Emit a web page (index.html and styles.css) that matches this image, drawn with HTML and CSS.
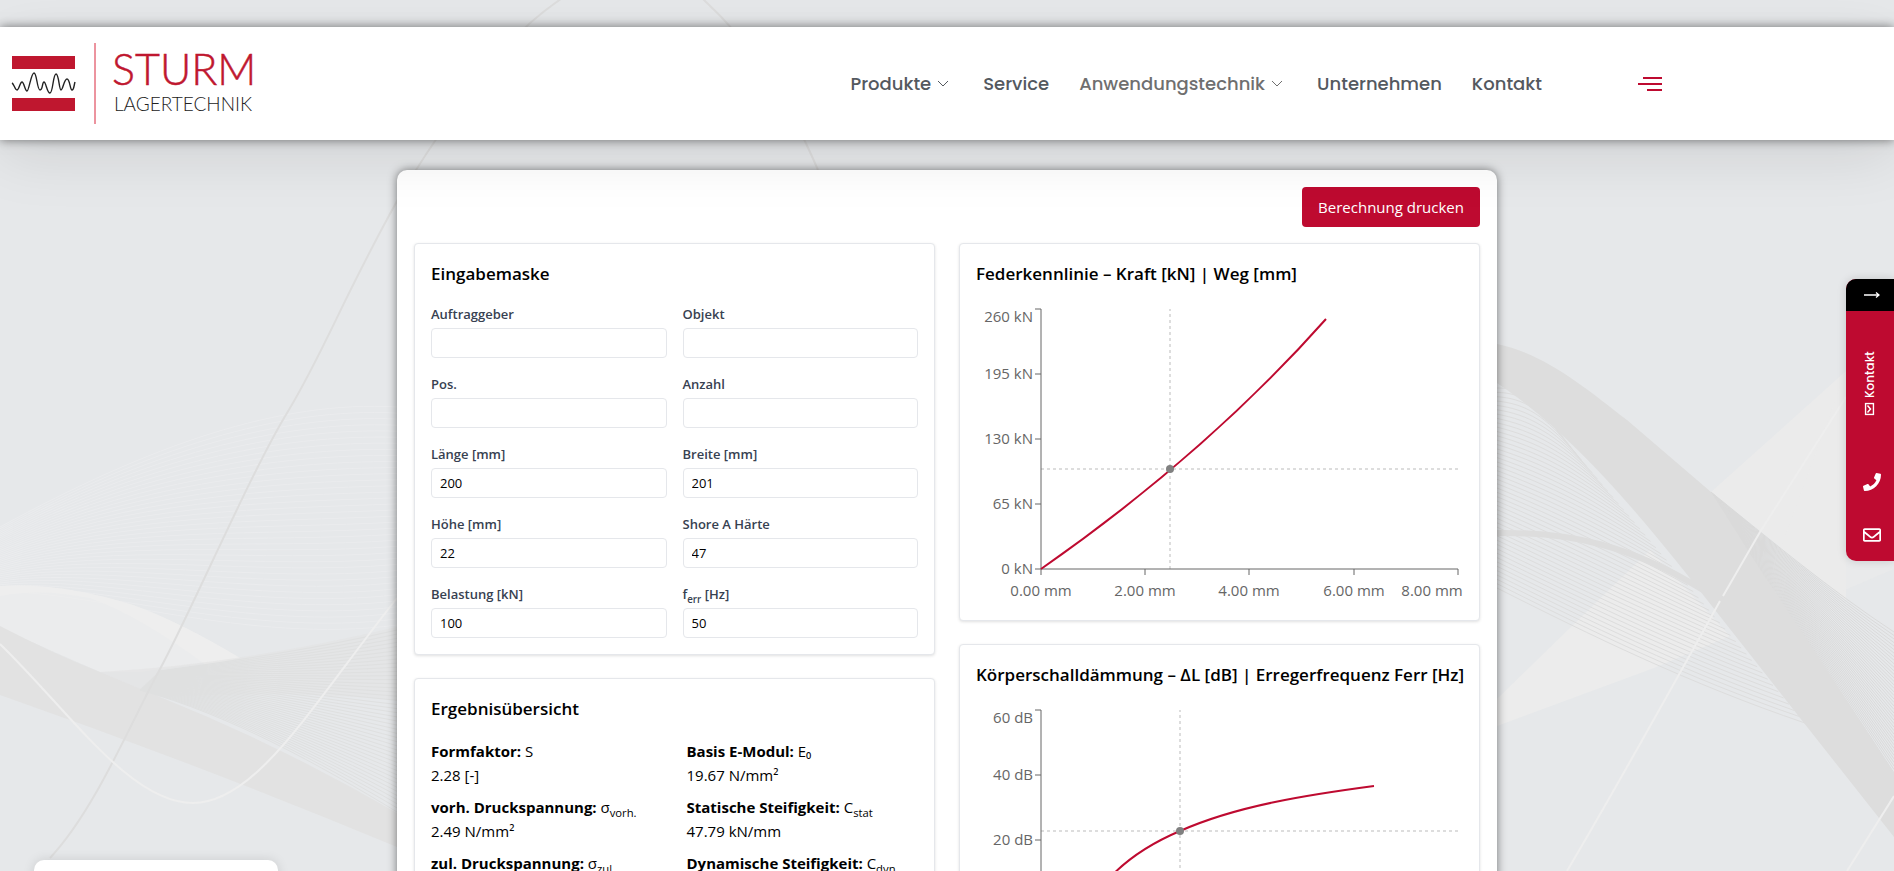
FILE: index.html
```html
<!DOCTYPE html>
<html lang="de">
<head>
<meta charset="utf-8">
<meta name="viewport" content="width=device-width, initial-scale=1">
<title>Sturm Lagertechnik</title>
<link rel="stylesheet" href="styles.css">
</head>
<body>
<div class="page">
  <svg class="backdrop" viewBox="0 0 1894 871" preserveAspectRatio="xMidYMid slice" aria-hidden="true">
    <g id="veil-left" stroke="#ebecee" fill="none"></g>
    <path fill="#eeeeee" fill-opacity=".6" d="M0 586Q60 582 133 605Q180 622 240 658L140 672L100 672Q50 650 0 628Z"/>
    <path fill="#eeeeee" d="M0 586Q60 582 133 605Q180 622 240 658L207 666Q140 616 90 598Q40 588 0 596Z"/>
    <path fill="#e2e2e2" d="M0 626Q50 652 100 672L160 697Q280 745 397 813V847Q200 765 0 695Z"/>
    <path fill="#e2e2e2" fill-opacity=".6" d="M100 672Q240 664 397 627V700Q280 690 160 697Z"/>
    <g id="veil-low" stroke="#dfe0e0" fill="none"></g>
    <path fill="none" stroke="#dddddd" stroke-width="2" d="M50 858C95 810 130 724 160 669S250 474 287 413S340 304 397 201C430 145 480 72 529 24C590 -30 650 -50 704 0S790 105 818 170"/>
    <path fill="none" stroke="#eeeeee" stroke-width="2" d="M0 644C70 712 130 803 193 803S310 708 397 598"/>
    <path fill="#ebebeb" d="M1711 492L1846 371V600L1794 558Z"/>
    <path fill="#ebebeb" fill-opacity=".6" d="M1846 371L1894 340V569L1840 592L1780 550Z"/>
    <path fill="#ececec" d="M1497 699L1650 550L1730 636L1654 668L1497 726Z"/>
    <g id="veil-right" stroke="#dddddd" fill="none"></g>
    <path fill="none" stroke="#dddddd" stroke-width="6" d="M1497 533C1570 532 1630 545 1703 590"/>
    <g id="veil-edge" stroke="#dadada" fill="none"></g>
    <path fill="#dddddd" d="M1497 344C1543 353 1585 387 1627 420L1711 492Q1735 530 1761 571Q1794 620 1827 670L1894 773V837L1804 723Q1745 648 1689 577C1620 490 1560 425 1497 383Z"/>
    <path fill="none" stroke="#eeeeee" stroke-width="2" d="M1567 871C1615 790 1665 700 1720 601M1723 596L1760 532L1846 397M1847 871L1894 796"/>
  </svg>

  <header class="topbar">
    <a class="logo" href="#" aria-label="Sturm Lagertechnik">
      <svg width="270" height="89" viewBox="0 0 270 89">
        <path fill="#bf172f" d="M12 17h63v13H12zM12 59h63v13H12z"/>
        <path fill="none" stroke="#222" stroke-width="1.400" d="M12 44c2 1 3 7 5 7s3-8 5-8 3 9 5 9 4-18 7-18 3 17 6 17 2-8 4-8 3 11 6 11 3-19 6-19 3 16 5 16 3-11 6-11 3 11 5 11 2-5 3-8"/>
        <path stroke="#d9293f" d="M95 4v81"/>
        <text class="logo-name" x="112" y="46">STURM</text>
        <text class="logo-sub" x="114" y="72">LAGERTECHNIK</text>
      </svg>
    </a>
    <nav class="nav">
      <a class="nav-link nav-drop" href="#">Produkte
        <svg width="12" height="8" viewBox="0 0 12 8"><path d="M1 1l5 5 5-5"/></svg></a>
      <a class="nav-link" href="#">Service</a>
      <a class="nav-link nav-drop nav-current" href="#">Anwendungstechnik
        <svg width="12" height="8" viewBox="0 0 12 8"><path d="M1 1l5 5 5-5"/></svg></a>
      <a class="nav-link" href="#">Unternehmen</a>
      <a class="nav-link" href="#">Kontakt</a>
    </nav>
    <button class="burger" type="button" aria-label="Menü">
      <svg width="24" height="16" viewBox="0 0 24 16"><path fill="#be0a30" d="M5 1h19v2H5zM0 7h24v2H0zM9 13h15v2H9z"/></svg>
    </button>
  </header>

  <main class="panel">
    <div class="actions"><button class="print" type="button">Berechnung drucken</button></div>
    <div class="columns">
      <div class="column">
        <section class="card">
          <h2>Eingabemaske</h2>
          <form class="fields">
            <div class="field"><label for="f1">Auftraggeber</label><input id="f1" type="text"></div>
            <div class="field"><label for="f2">Objekt</label><input id="f2" type="text"></div>
            <div class="field"><label for="f3">Pos.</label><input id="f3" type="text"></div>
            <div class="field"><label for="f4">Anzahl</label><input id="f4" type="text"></div>
            <div class="field"><label for="f5">Länge [mm]</label><input id="f5" type="text" value="200"></div>
            <div class="field"><label for="f6">Breite [mm]</label><input id="f6" type="text" value="201"></div>
            <div class="field"><label for="f7">Höhe [mm]</label><input id="f7" type="text" value="22"></div>
            <div class="field"><label for="f8">Shore A Härte</label><input id="f8" type="text" value="47"></div>
            <div class="field"><label for="f9">Belastung [kN]</label><input id="f9" type="text" value="100"></div>
            <div class="field"><label for="f10">f<sub>err</sub> [Hz]</label><input id="f10" type="text" value="50"></div>
          </form>
        </section>
        <section class="card card-fill">
          <h2>Ergebnisübersicht</h2>
          <div class="results">
            <p><strong>Formfaktor:</strong> S<br>2.28 [-]</p>
            <p><strong>Basis E-Modul:</strong> E₀<br>19.67 N/mm²</p>
            <p><strong>vorh. Druckspannung:</strong> σ<sub>vorh.</sub><br>2.49 N/mm²</p>
            <p><strong>Statische Steifigkeit:</strong> C<sub>stat</sub><br>47.79 kN/mm</p>
            <p><strong>zul. Druckspannung:</strong> σ<sub>zul.</sub></p>
            <p><strong>Dynamische Steifigkeit:</strong> C<sub>dyn</sub></p>
          </div>
        </section>
      </div>
      <div class="column">
        <section class="card">
          <h2>Federkennlinie – Kraft [kN] | Weg [mm]</h2>
          <svg class="chart" viewBox="0 0 487 300">
            <path class="guide" d="M194 265V5M65 165H482"/>
            <path class="axis" d="M65 5V265M59 5h6M59 70h6M59 135h6M59 200h6M59 265h6M65 265H482M65 265v6M169 265v6M273 265v6M378 265v6M482 265v6"/>
            <g class="tick tick-y"><text x="57" y="18">260 kN</text><text x="57" y="75">195 kN</text><text x="57" y="140">130 kN</text><text x="57" y="205">65 kN</text><text x="57" y="270">0 kN</text></g>
            <g class="tick tick-x"><text x="65" y="292">0.00 mm</text><text x="169" y="292">2.00 mm</text><text x="273" y="292">4.00 mm</text><text x="378" y="292">6.00 mm</text><text x="456" y="292">8.00 mm</text></g>
            <path class="curve" d="M65 265Q230 150 350 15"/>
            <circle class="dot" cx="194" cy="165" r="4"/>
          </svg>
        </section>
        <section class="card">
          <h2>Körperschalldämmung – ΔL [dB] | Erregerfrequenz Ferr [Hz]</h2>
          <svg class="chart" viewBox="0 0 487 300">
            <path class="guide" d="M204 265V5M65 126H482"/>
            <path class="axis" d="M65 5V265M59 5h6M59 70h6M59 135h6M59 200h6M59 265h6M65 265H482"/>
            <g class="tick tick-y"><text x="57" y="18">60 dB</text><text x="57" y="75">40 dB</text><text x="57" y="140">20 dB</text></g>
            <path class="curve" d="M124 184Q152 148 204 126C260 101 330 90 398 81"/>
            <circle class="dot" cx="204" cy="126" r="4"/>
          </svg>
        </section>
      </div>
    </div>
  </main>

  <aside class="dock">
    <button class="dock-toggle" type="button" aria-label="Einklappen">
      <svg width="16" height="8" viewBox="0 0 16 8"><path fill="none" stroke="#fff" stroke-width="1.300" d="M0 4h15M12 1.500l3 2.500-3 2.500"/></svg>
    </button>
    <a class="dock-contact" href="#">
      <svg width="13" height="10" viewBox="0 0 13 10"><path fill="none" stroke="#fff" stroke-width="1.500" d="M1 1h11v8H1zM3 3l3.500 3L10 3"/></svg>
      Kontakt</a>
    <a class="dock-icon" href="#" aria-label="Telefon">
      <svg width="18" height="18" viewBox="0 0 512 512"><path fill="#fff" d="M493.4 24.6l-104-24c-11.3-2.6-22.9 3.3-27.5 13.9l-48 112c-4.2 9.8-1.4 21.3 6.9 28l60.6 49.6c-36 76.7-98.9 140.5-177.2 177.2l-49.6-60.6c-6.8-8.3-18.2-11.1-28-6.9l-112 48C3.9 366.5-2 378.1.6 389.4l24 104C27.1 504.2 36.7 512 48 512c256.1 0 464-207.5 464-464 0-11.2-7.7-20.9-18.6-23.4z"/></svg>
    </a>
    <a class="dock-icon" href="#" aria-label="E-Mail">
      <svg width="18" height="18" viewBox="0 0 512 512"><path fill="#fff" d="M464 64H48C21.5 64 0 85.500 0 112v288c0 26.500 21.500 48 48 48h416c26.500 0 48-21.500 48-48V112c0-26.500-21.500-48-48-48zm0 48v40.800c-22.400 18.300-58.200 46.700-134.600 106.500-16.800 13.200-50.200 45.100-73.400 44.700-23.200.4-56.600-31.500-73.400-44.700C106.200 199.500 70.400 171.100 48 152.800V112h416zM48 400V214.400c22.900 18.300 55.400 43.900 104.900 82.600 21.900 17.200 60.200 55.200 103.100 55 42.700.2 80.500-37.200 103.100-54.900 49.500-38.800 82-64.400 104.900-82.700V400H48z"/></svg>
    </a>
  </aside>
  <div class="notice"></div>
</div>
<script src="backdrop.js"></script>
</body>
</html>
```
FILE: styles.css
```css
* { box-sizing: border-box; }
body { margin: 0; background: #e6e8ea; color: #000; font: 15px/24px "Segoe UI", "Open Sans", "Noto Sans", sans-serif; }
a { color: inherit; text-decoration: none; }
button { border: 0; font: inherit; cursor: pointer; }

.page { position: relative; height: 100vh; overflow: hidden; padding-top: 27px; }
.backdrop { position: absolute; inset: 0; width: 100%; height: 100%; }

.topbar {
  position: relative; z-index: 2;
  display: flex; align-items: center;
  padding: 12px 232px 12px 0;
  background: #fff;
  box-shadow: 0 0 10px rgba(0, 0, 0, .5), 0 15px 60px rgba(0, 0, 0, .1);
}
.logo, .logo svg { display: block; }
.logo-name { font: 300 43px Lato, sans-serif; fill: #bf172f; stroke: #bf172f; stroke-width: 0.500; }
.logo-sub { font: 300 19px Lato, sans-serif; fill: #222; }
.nav { display: flex; gap: 30px; margin-left: auto; color: #54595f; font: 500 18px/24px Poppins, Inter, sans-serif; }
.nav-drop { display: flex; align-items: center; gap: 6px; padding-right: 4px; }
.nav-drop svg { fill: none; stroke: currentColor; }
.nav-current { color: #6f6f6f; }
.burger { display: flex; margin-left: 96px; padding: 0; background: none; }

.panel {
  position: relative; z-index: 1;
  max-width: 1100px; margin: 30px auto 0; padding: 17px;
  background: #fff; border-radius: 10px;
  box-shadow: 0 0 10px rgba(0, 0, 0, .5);
}
.actions { display: flex; justify-content: flex-end; margin-bottom: 16px; }
.print { padding: 8px 16px; border-radius: 4px; background: #be0a30; color: #fff; }
.columns { display: grid; grid-template-columns: 1fr 1fr; gap: 24px; }
.column { display: flex; flex-direction: column; gap: 23px; min-width: 0; }
.card { padding: 16px; border: 1px solid #e5e7eb; border-radius: 4px; background: #fff; box-shadow: 0 1px 3px rgba(0, 0, 0, .12); }
.card-fill { flex: 1; }
h2 { margin: 0 0 16px; font-size: 17px; line-height: 28px; font-weight: 600; white-space: nowrap; }

.fields { display: grid; grid-template-columns: 1fr 1fr; gap: 16px; }
.field { display: flex; flex-direction: column; gap: 4px; }
.field label { height: 20px; color: #374151; font-size: 13px; line-height: 20px; font-weight: 600; }
.field input { width: 100%; height: 30px; padding: 4px 8px; border: 1px solid #e5e7eb; border-radius: 4px; background: #fff; color: #000; font: inherit; font-size: 13px; }
sub { font-size: 75%; line-height: 0; position: relative; bottom: -4px; vertical-align: baseline; }
.results { display: grid; grid-template-columns: 1fr 1fr; gap: 8px 24px; }
.results p { margin: 0; white-space: nowrap; }

.chart { display: block; width: 100%; }
.axis { fill: none; stroke: #666; }
.guide { fill: none; stroke: #bbb; stroke-dasharray: 3 3; }
.curve { fill: none; stroke: #be0a30; stroke-width: 2; }
.dot { fill: #808080; }
.tick { fill: #666; font-size: 15px; }
.tick-y { text-anchor: end; }
.tick-x { text-anchor: middle; }

.dock {
  position: absolute; z-index: 3; right: 0; top: 279px; width: 48px;
  display: flex; flex-direction: column; overflow: hidden;
  border-radius: 10px 0 0 10px; background: #be0a30; color: #fff;
  box-shadow: 0 0 10px rgba(0, 0, 0, .15);
}
.dock-toggle { display: flex; justify-content: center; align-items: center; height: 32px; padding: 0 0 0 4px; background: #000; }
.dock-contact { display: flex; align-items: center; justify-content: center; gap: 6px; height: 144px; writing-mode: vertical-rl; transform: rotate(180deg); font: 500 12px/16px Poppins, Inter, sans-serif; }
.dock-contact svg { transform: rotate(90deg); }
.dock-icon { display: flex; justify-content: center; align-items: center; height: 53px; padding-left: 4px; }
.notice { position: absolute; z-index: 3; left: 34px; top: 860px; width: 244px; height: 60px; border-radius: 10px; background: #fff; box-shadow: 0 0 12px rgba(0, 0, 0, .12); }
```
FILE: backdrop.js
```js
// Fills a group with curves blended between two cubic outlines.
function veil(id, from, to, count) {
  const group = document.getElementById(id);
  for (let i = 0; i <= count; i++) {
    const p = from.map((v, k) => (v + (to[k] - v) * i / count).toFixed(1));
    const path = document.createElementNS("http://www.w3.org/2000/svg", "path");
    path.setAttribute("d", `M${p[0]} ${p[1]}C${p.slice(2).join(" ")}`);
    group.appendChild(path);
  }
}
veil("veil-left", [0, 527, 150, 445, 280, 400, 397, 407], [0, 592, 90, 590, 250, 645, 397, 625], 36);
veil("veil-low", [160, 671, 240, 660, 320, 648, 397, 630], [140, 690, 230, 715, 320, 765, 397, 812], 44);
veil("veil-right", [1497, 388, 1520, 388, 1535, 395, 1560, 435], [1497, 588, 1590, 635, 1690, 684, 1805, 723], 46);
veil("veil-edge", [1711, 492, 1770, 540, 1830, 590, 1894, 632], [1711, 502, 1757, 566, 1823, 664, 1894, 773], 40);
```
